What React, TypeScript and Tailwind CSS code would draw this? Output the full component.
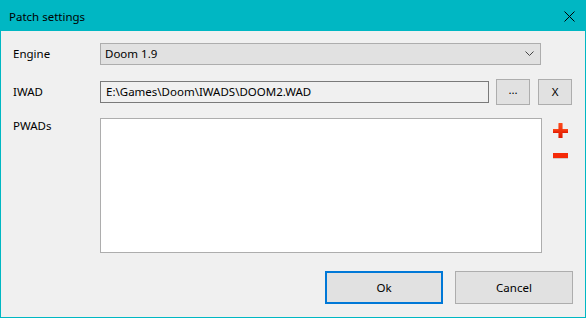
import React from "react";

function PlusIcon() {
  return (
    <svg width="15" height="16" viewBox="0 0 15 16">
      <defs>
        <linearGradient id="rg" x1="0" y1="0" x2="0" y2="1">
          <stop offset="0" stopColor="#ff4a1a" />
          <stop offset="1" stopColor="#e01800" />
        </linearGradient>
      </defs>
      <rect x="5.5" y="1" width="4" height="14" fill="#c8a8a0" opacity="0.5" />
      <rect x="0" y="6" width="15" height="4" fill="url(#rg)" />
      <rect x="5.5" y="0" width="4" height="15" fill="url(#rg)" />
    </svg>
  );
}

function MinusIcon() {
  return (
    <svg width="15" height="6" viewBox="0 0 15 6">
      <rect x="0" y="1" width="15" height="5" fill="#c8b0a8" opacity="0.6" />
      <rect x="0" y="0" width="15" height="5" fill="#f52a08" />
    </svg>
  );
}

export default function App() {
  return (
    <div className="flex h-[318px] w-[586px] flex-col border border-[#00b7c3] bg-[#f0f0f0] font-['Noto_Sans',sans-serif] text-[11.5px] text-black">
      <div className="flex h-[30px] shrink-0 items-center justify-between bg-[#00b7c3] pl-[8px] pr-[10px] pt-[2px]">
        <span className="text-[11.5px]">Patch settings</span>
        <svg width="11" height="11" viewBox="0 0 11 11" className="-mt-[1px]">
          <path d="M0.5 0.5 L10.5 10.5 M10.5 0.5 L0.5 10.5" stroke="#000" strokeWidth="1" />
        </svg>
      </div>
      <div className="flex flex-1 flex-col pl-[12px] pr-[12px] pt-[12px]">
        <div className="flex h-[22px] items-center">
          <span className="w-[87px]">Engine</span>
          <div className="flex h-[22px] w-[441px] items-center justify-between border border-[#adadad] bg-[#e1e1e1] pl-[4px] pr-[6px]">
            <span>Doom 1.9</span>
            <svg width="9" height="6" viewBox="0 0 9 6">
              <path d="M0.5 0.5 L4.5 4.5 L8.5 0.5" stroke="#444" strokeWidth="1" fill="none" />
            </svg>
          </div>
        </div>
        <div className="mt-[14px] flex h-[26px] items-center">
          <span className="w-[87px]">IWAD</span>
          <div className="flex h-[22px] w-[389px] items-center border border-[#7a7a7a] bg-[#f0f0f0] pl-[5px]">
            E:\Games\Doom\IWADS\DOOM2.WAD
          </div>
          <button className="ml-[7px] h-[26px] w-[34px] border border-[#adadad] bg-[#e1e1e1] pb-[4px] leading-none">...</button>
          <button className="ml-[8px] h-[26px] w-[34px] border border-[#adadad] bg-[#e1e1e1]">X</button>
        </div>
        <div className="mt-[13px] flex">
          <span className="w-[87px] -mt-[1px]">PWADs</span>
          <div className="h-[135px] w-[442px] border border-[#adadad] bg-white" />
          <div className="ml-[11px] flex flex-col items-center pt-[5px]">
            <PlusIcon />
            <div className="mt-[14px]">
              <MinusIcon />
            </div>
          </div>
        </div>
        <div className="mt-[18px] flex justify-end">
          <button className="h-[33px] w-[118px] border-2 border-[#0078d7] bg-[#e1e1e1]">Ok</button>
          <button className="ml-[12px] h-[33px] w-[118px] border border-[#adadad] bg-[#e1e1e1]">Cancel</button>
        </div>
      </div>
    </div>
  );
}
